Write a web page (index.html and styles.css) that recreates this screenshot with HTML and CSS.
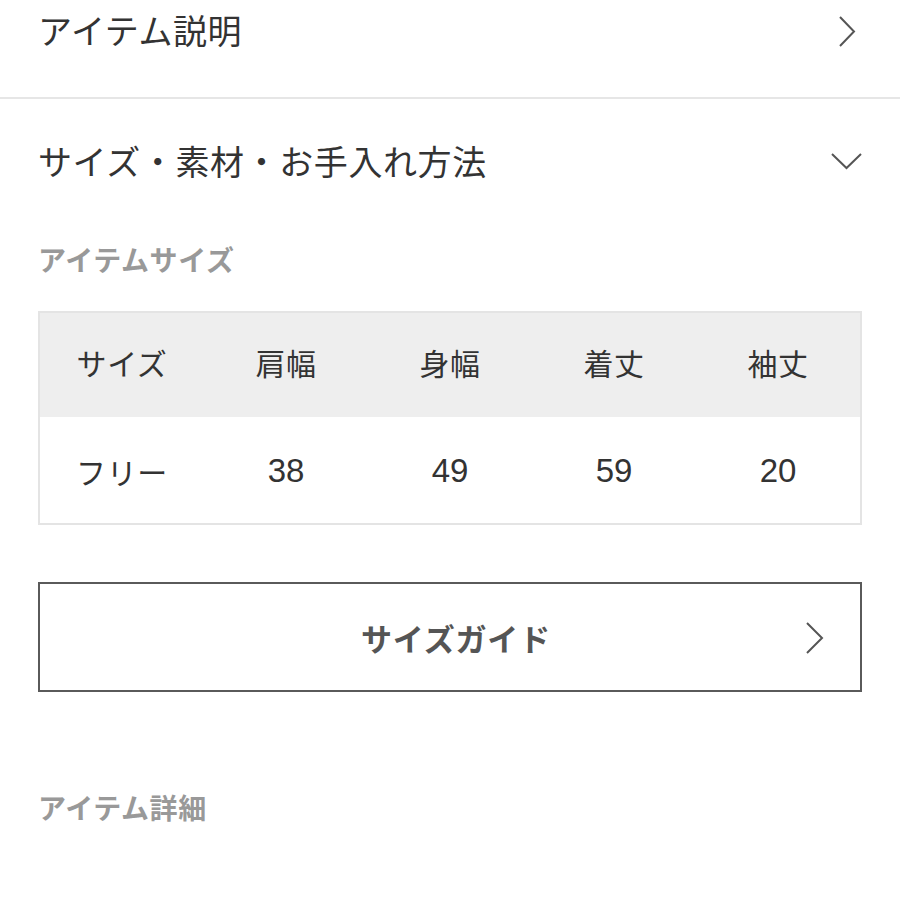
FILE: index.html
```html
<!DOCTYPE html>
<html lang="ja">
<head>
<meta charset="utf-8">
<link rel="stylesheet" href="styles.css">
</head>
<body>
<div class="page">
  <div class="row row-top">
    <span class="row-title">アイテム説明</span>
    <svg class="chev-right" width="18" height="31" viewBox="0 0 18 31"><polyline points="2,1 16,15.5 2,30" fill="none" stroke="#555" stroke-width="2"/></svg>
  </div>
  <div class="divider"></div>
  <div class="section">
    <div class="row row-second">
      <span class="row-title">サイズ・素材・お手入れ方法</span>
      <svg class="chev-down" width="31" height="18" viewBox="0 0 31 18"><polyline points="1,2 15.5,16 30,2" fill="none" stroke="#555" stroke-width="2"/></svg>
    </div>
    <div class="label label-size">アイテムサイズ</div>
    <div class="size-table">
      <div class="tr th">
        <div class="cell">サイズ</div>
        <div class="cell">肩幅</div>
        <div class="cell">身幅</div>
        <div class="cell">着丈</div>
        <div class="cell">袖丈</div>
      </div>
      <div class="tr td">
        <div class="cell">フリー</div>
        <div class="cell num">38</div>
        <div class="cell num">49</div>
        <div class="cell num">59</div>
        <div class="cell num">20</div>
      </div>
    </div>
    <div class="guide-btn">
      <span class="guide-text">サイズガイド</span>
      <svg class="chev-btn" width="19" height="32" viewBox="0 0 19 32"><polyline points="2,1 17,16 2,31" fill="none" stroke="#555" stroke-width="2"/></svg>
    </div>
    <div class="label label-detail">アイテム詳細</div>
  </div>
</div>
</body>
</html>
```
FILE: styles.css
```css
html, body {
  margin: 0;
  padding: 0;
  background: #fff;
}
body {
  font-family: "Noto Sans CJK JP", "Noto Sans", sans-serif;
  color: #333;
}
.page {
  width: 900px;
}
.row {
  display: flex;
  align-items: center;
  justify-content: space-between;
  padding: 0 38px;
}
.row-title {
  font-size: 34px;
  line-height: 50px;
  letter-spacing: 0.6px;
  color: #333;
}
.row-top {
  height: 60px;
  margin-bottom: 37px;
}
.chev-right {
  margin-right: 6px;
  margin-top: 3px;
}
.divider {
  height: 2px;
  background: #e6e6e6;
}
.section {
  padding: 0 38px;
}
.row-second {
  padding: 0;
  margin-top: 37px;
  height: 50px;
}
.label {
  font-size: 28px;
  font-weight: 700;
  line-height: 40px;
  letter-spacing: 0.6px;
  color: #999;
}
.label-size {
  margin-top: 53px;
}
.size-table {
  margin-top: 32px;
  border: 2px solid #e4e4e4;
}
.tr {
  display: grid;
  grid-template-columns: repeat(5, 1fr);
  align-items: center;
}
.th {
  height: 104px;
  background: #eeeeee;
}
.th .cell {
  padding-bottom: 6px;
}
.td {
  height: 106px;
  background: #fff;
}
.cell {
  text-align: center;
  font-size: 30px;
  letter-spacing: 0.6px;
  color: #333;
}
.td .cell {
  padding-top: 2px;
}
.num {
  font-family: "Liberation Sans", "Noto Sans", sans-serif;
  font-size: 33px;
  letter-spacing: 0;
}
.guide-btn {
  margin-top: 57px;
  height: 106px;
  border: 2px solid #5a5a5a;
  display: flex;
  align-items: center;
  justify-content: center;
  position: relative;
}
.guide-text {
  font-size: 31px;
  font-weight: 700;
  letter-spacing: 0.8px;
  color: #555;
  margin-left: 12px;
}
.chev-btn {
  position: absolute;
  right: 36px;
  top: 38px;
}
.label-detail {
  margin-top: 95px;
}
```
